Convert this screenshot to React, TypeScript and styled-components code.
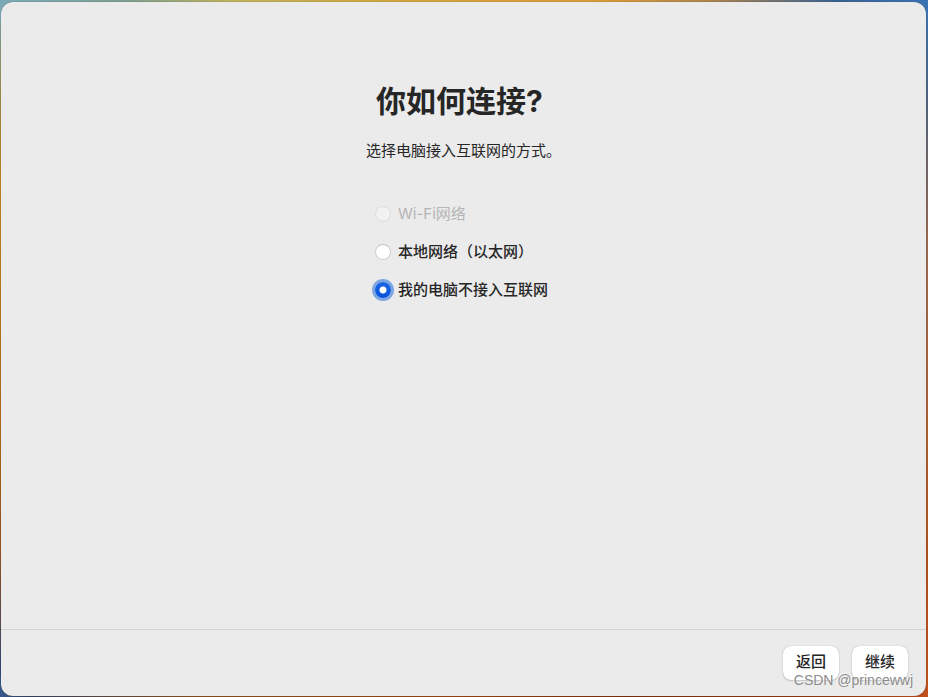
import React, { useState } from "react";
import styled, { createGlobalStyle } from "styled-components";

const GlobalStyle = createGlobalStyle`
  * { box-sizing: border-box; }
  body {
    margin: 0;
    color: #262626;
    font-family: Inter, "Noto Sans CJK SC", sans-serif;
    font-size: 15px;
    line-height: 22px;
  }
`;

const Desktop = styled.div`
  display: flex;
  min-height: 100vh;
  padding: 2px 2px 1px 1px;
  background:
    linear-gradient(90deg, #7aaab8 0%, #7e9e8f 14%, #bfb25c 25%, #d2a43c 45%, #d89a38 65%, #a9834f 77%, #3a6292 90%, #3a74b4 100%) top / 100% 20px no-repeat,
    linear-gradient(90deg, #38588c 0%, #364561 3%, #8c501c 22%, #984410 50%, #7c300c 68%, #963c10 90%, #c0501c 100%) bottom / 100% 20px no-repeat,
    linear-gradient(180deg, #7aaab8 0%, #a19148 14%, #c78622 27%, #b96d1d 60%, #9f561f 78%, #354a78 96%, #38588c 100%) left / 50% 100% no-repeat,
    linear-gradient(180deg, #3a74b4 0%, #52647c 15%, #9a6a50 35%, #ac6036 60%, #b0521c 80%, #c0501c 100%) right / 50% 100% no-repeat;
`;

const Window = styled.form`
  position: relative;
  display: flex;
  flex: 1;
  flex-direction: column;
  overflow: hidden;
  border-radius: 12px;
  background: #ebebeb;
  box-shadow: 0 0 1px rgba(0, 0, 0, 0.6);
`;

const Content = styled.main`
  display: flex;
  flex: 1;
  flex-direction: column;
  align-items: center;
  padding: 78px 24px 24px;
`;

const Title = styled.h1`
  margin: 0 8px 0 0;
  font-size: 30px;
  font-weight: 700;
  line-height: 42px;
`;

const Subtitle = styled.p`
  margin: 18px 0 0;
`;

const Choices = styled.fieldset`
  display: flex;
  flex-direction: column;
  gap: 16px;
  margin: 41px 4px 0 0;
  padding: 0;
  border: 0;
`;

const Choice = styled.label<{ $disabled?: boolean }>`
  display: flex;
  align-items: center;
  gap: 7px;
  color: ${({ $disabled }) => ($disabled ? "#b5b5b5" : "inherit")};
  font-weight: ${({ $disabled }) => ($disabled ? 400 : 500)};
`;

const Radio = styled.input`
  appearance: none;
  flex: none;
  width: 16px;
  height: 16px;
  margin: 0;
  border: 1px solid #d0d0d0;
  border-top-color: #c0c0c0;
  border-radius: 50%;
  background: #fff;

  &:disabled {
    border-color: #dcdcdc;
    background: #f2f2f2;
  }

  &:checked {
    border: 0;
    background: radial-gradient(circle, #fff 3px, transparent 4px),
      linear-gradient(#1968e4, #0850dc);
    box-shadow: 0 0 0 3px #7da6e2;
  }
`;

const Footer = styled.footer`
  display: flex;
  justify-content: flex-end;
  gap: 13px;
  padding: 16px 18px;
  border-top: 1px solid #d2d2d2;
`;

const Button = styled.button`
  width: 56px;
  height: 34px;
  padding: 0 0 2px;
  border: 0;
  border-radius: 8px;
  background: #fff;
  box-shadow: 0 0 1px rgba(0, 0, 0, 0.3), 0 1px 2px rgba(0, 0, 0, 0.16);
  color: inherit;
  font: inherit;
  font-weight: 500;
`;

const Watermark = styled.span`
  position: absolute;
  right: 13px;
  bottom: 5px;
  color: #8c8c8c;
  font-family: "Liberation Sans", Arial, sans-serif;
  font-size: 14px;
  text-shadow: -1px -1px 0 rgba(255, 255, 255, 0.7);
  pointer-events: none;
`;

const options = [
  { id: "wifi", label: "Wi-Fi网络", disabled: true },
  { id: "ethernet", label: "本地网络（以太网）" },
  { id: "offline", label: "我的电脑不接入互联网" },
];

export default function App() {
  const [selected, setSelected] = useState("offline");

  return (
    <Desktop lang="zh-CN">
      <GlobalStyle />
      <Window onSubmit={(event) => event.preventDefault()}>
        <Content>
          <Title id="title">你如何连接?</Title>
          <Subtitle>选择电脑接入互联网的方式。</Subtitle>
          <Choices aria-labelledby="title">
            {options.map(({ id, label, disabled }) => (
              <Choice key={id} htmlFor={id} $disabled={disabled}>
                <Radio
                  type="radio"
                  name="connection"
                  id={id}
                  value={id}
                  disabled={disabled}
                  checked={selected === id}
                  onChange={() => setSelected(id)}
                />
                {label}
              </Choice>
            ))}
          </Choices>
        </Content>
        <Footer>
          <Button type="button">返回</Button>
          <Button type="submit">继续</Button>
        </Footer>
        <Watermark>CSDN @princewwj</Watermark>
      </Window>
    </Desktop>
  );
}
